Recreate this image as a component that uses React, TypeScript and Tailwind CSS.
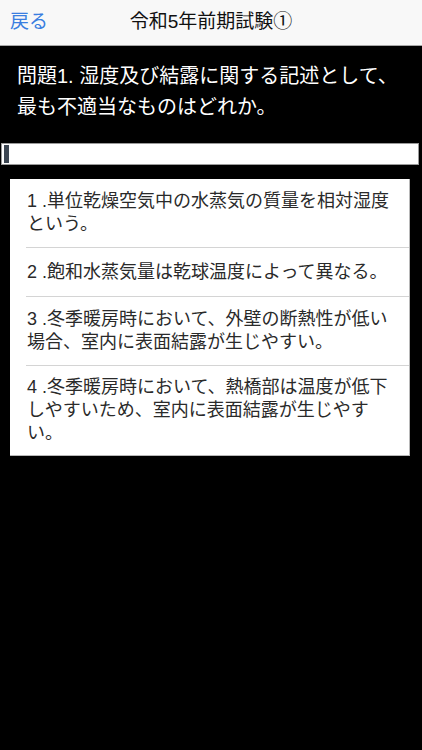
import React from "react";

const font = { fontFamily: '"Liberation Sans", "Noto Sans CJK JP", sans-serif' };

const rows: { h: string; lines: string[] }[] = [
  { h: "h-[69px]", lines: ["1 .単位乾燥空気中の水蒸気の質量を相対湿度", "という。"] },
  { h: "h-[49px]", lines: ["2 .飽和水蒸気量は乾球温度によって異なる。"] },
  { h: "h-[69px]", lines: ["3 .冬季暖房時において、外壁の断熱性が低い", "場合、室内に表面結露が生じやすい。"] },
  { h: "h-[89px]", lines: ["4 .冬季暖房時において、熱橋部は温度が低下", "しやすいため、室内に表面結露が生じやす", "い。"] },
];

export default function App() {
  return (
    <div className="w-[422px] h-[750px] bg-black overflow-hidden" style={font}>
      <div className="h-[46px] bg-[#f8f8f8] border-b border-[#a8a8a8] relative flex items-center justify-center">
        <span className="absolute left-[10px] top-[10px] text-[19px] leading-[24px] text-[#3a7ee0]">戻る</span>
        <span className="text-[19px] leading-[24px] text-[#111] mt-[-2px]">令和5年前期試験①</span>
      </div>
      <div className="pl-[17px] pt-[15px] pb-[20px] text-white text-[20px] leading-[31px] whitespace-nowrap">
        <div>問題1. 湿度及び結露に関する記述として、</div>
        <div>最も不適当なものはどれか。</div>
      </div>
      <div className="ml-[1px] w-[418px] h-[22px] bg-white border border-[#9a9a9a] flex items-center pl-[2px]">
        <div className="w-[5px] h-[18px] bg-[#3c4652]"></div>
      </div>
      <div className="mt-[14px] ml-[10px] w-[400px] bg-white border-r border-b border-[#b8b8b8]">
        {rows.map((r, i) => (
          <div key={i} className={`${r.h} pl-[16px] flex flex-col`}>
            <div className={`flex-1 flex flex-col justify-center text-[18px] leading-[23px] text-[#2a2a2a] whitespace-nowrap ${i < rows.length - 1 ? "border-b border-[#d4d4d4]" : ""}`}>
              {r.lines.map((l, j) => (
                <div key={j} className="pl-[1px]">{l}</div>
              ))}
            </div>
          </div>
        ))}
      </div>
    </div>
  );
}
